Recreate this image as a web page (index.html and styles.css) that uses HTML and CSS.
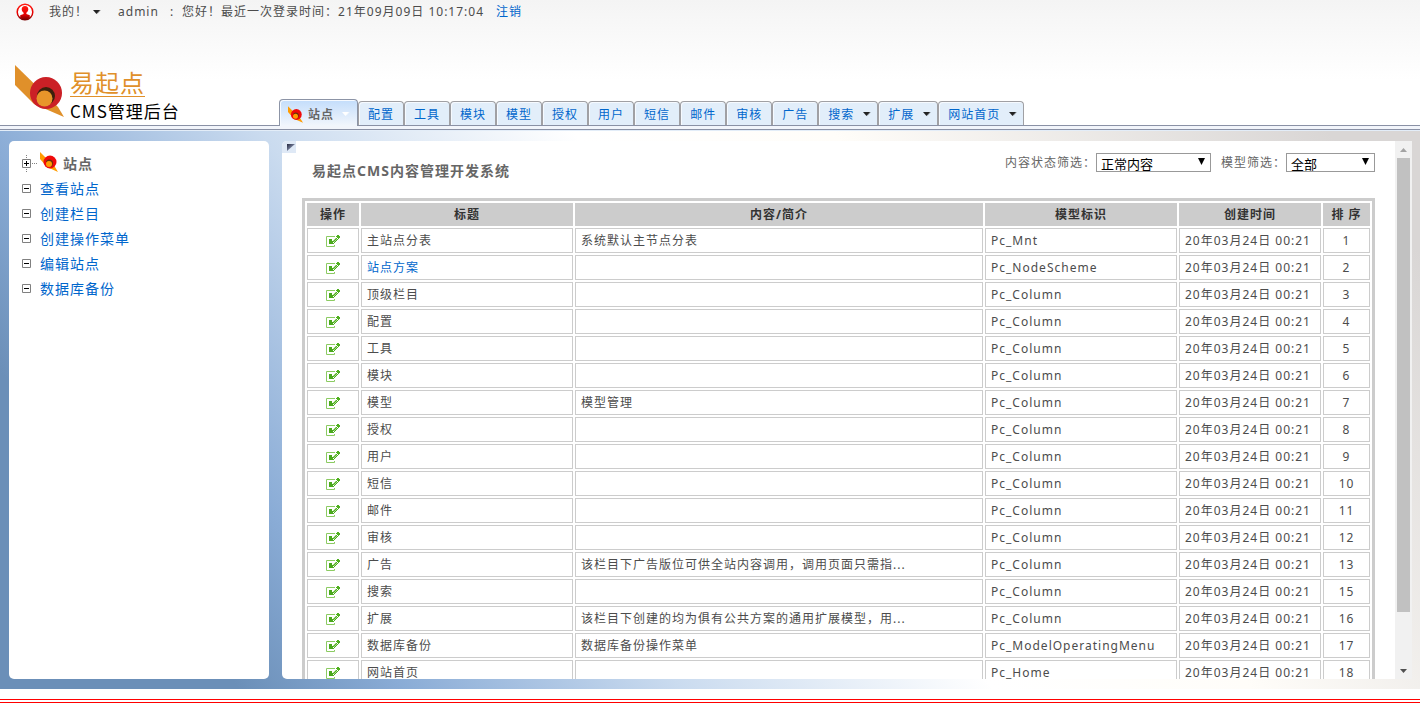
FILE: index.html
```html
<!DOCTYPE html>
<html lang="zh-CN">
<head>
<meta charset="utf-8">
<title>易起点CMS管理后台</title>
<link rel="stylesheet" href="styles.css">
</head>
<body>
<svg class="sprite" aria-hidden="true">
  <symbol id="edit" viewBox="0 0 14 12">
    <path d="M9 1.500H.5v10h8V10" fill="none" stroke="#8ccb62"/>
    <path d="M3 4h3v2h1v2h1v1H3z" fill="#4aa81c"/>
    <path d="M6 7h1v1H6zM8 7h1v1H8zM7 6h1v1H7zM9 6h1v1H9zM8 5h1v1H8zM10 5h1v1h-1zM7 8h1v1H7zM9 4h1v1H9zM11 4h1v1h-1zM10 3h1v1h-1z" fill="#4fae22"/>
    <path d="M7 5h1v1H7zM8 4h1v1H8zM9 5h1v1H9zM10 4h1v1h-1zM8 6h1v1H8zM9 3h1v1H9z" fill="#a9d98a"/>
    <path d="M11 0h2v1h1v2h-1v1h-1V3h-1V2h-1V1h1z" fill="#4fb01e"/>
  </symbol>
  <symbol id="caret" viewBox="0 0 9 5">
    <path d="M1 0h7L4.500 4z"/>
    <path d="M7 0h2L5 4.500z" opacity=".35"/>
  </symbol>
  <symbol id="bird" viewBox="0 0 18 20">
    <path d="M0 0v7l7 8 11 5-3-5-9-9z" fill="#ff9c00"/>
    <circle cx="10" cy="10" r="6.500" fill="#f00a0a"/>
    <path d="M6 10q0-2 3-2.500 4 0 4 3.500 0 3-2 4-3-4-5-5z" fill="#6b3208"/>
    <circle cx="9" cy="12" r="3" fill="#ff9c00"/>
  </symbol>
  <symbol id="minus" viewBox="0 0 9 9">
    <path d="M.500.500h8v8h-8z" fill="#fff" stroke="#808080"/>
    <path d="M2 4.500h5" stroke="#000"/>
  </symbol>
</svg>

<header class="header">
  <div class="userbar">
    <svg class="user-icon" viewBox="0 0 18 18">
      <defs><linearGradient id="ring" x1="0" y1="0" x2="0" y2="1"><stop offset="0" stop-color="#ff1a10"/><stop offset=".6" stop-color="#e80000"/><stop offset="1" stop-color="#7a0000"/></linearGradient></defs>
      <circle cx="9" cy="9" r="7.800" fill="#fff" stroke="url(#ring)" stroke-width="1.500"/>
      <path d="M9 3c2.200 0 3.300 1.500 3.300 3.300 0 1.600-.800 2.800-1.900 3.400v1.300l3.400 1.300v2.500Q9 18.500 4.200 14.800v-2.500L7.600 11V9.700C6.500 9.100 5.700 7.900 5.700 6.300 5.700 4.500 6.800 3 9 3z" fill="url(#ring)"/>
    </svg>
    <button class="mine" type="button">我的！<svg class="caret"><use href="#caret"/></svg></button>
    <span class="name">admin</span>
    <span class="colon">:</span>
    <span>您好！最近一次登录时间：21年09月09日 10:17:04</span>
    <a class="logout" href="#">注销</a>
  </div>
  <div class="masthead">
    <a class="logo" href="#">
      <svg class="logo-mark" viewBox="0 0 50 53">
        <path d="M0 0v20l19 19 30 13-6-10z" fill="#e0902a"/>
        <circle cx="31" cy="28" r="16" fill="#cb2026"/>
        <circle cx="31" cy="31" r="9" fill="#3d200c"/>
        <circle cx="29.500" cy="33.500" r="8" fill="#e8952a"/>
      </svg>
      <span class="logo-text">
        <span class="brand">易起点</span>
        <span class="product">CMS管理后台</span>
      </span>
    </a>
    <nav class="tabs">
      <a class="tab active" href="#"><svg class="tab-bird"><use href="#bird"/></svg>站点<svg class="caret"><use href="#caret"/></svg></a>
      <a class="tab" href="#">配置</a>
      <a class="tab" href="#">工具</a>
      <a class="tab" href="#">模块</a>
      <a class="tab" href="#">模型</a>
      <a class="tab" href="#">授权</a>
      <a class="tab" href="#">用户</a>
      <a class="tab" href="#">短信</a>
      <a class="tab" href="#">邮件</a>
      <a class="tab" href="#">审核</a>
      <a class="tab" href="#">广告</a>
      <a class="tab drop-tab" href="#">搜索<svg class="caret"><use href="#caret"/></svg></a>
      <a class="tab drop-tab" href="#">扩展<svg class="caret"><use href="#caret"/></svg></a>
      <a class="tab drop-tab" href="#">网站首页<svg class="caret"><use href="#caret"/></svg></a>
    </nav>
  </div>
</header>
<div class="rule"></div>

<main class="main">
  <aside class="sidebar">
    <div class="root">
      <svg class="plus" viewBox="0 0 15 17">
        <path d="M4.500 0v17M10 8.500h5" stroke="#808080" stroke-dasharray="1 1"/>
        <path d="M.500 4.500h8v8h-8z" fill="#fff" stroke="#808080"/>
        <path d="M2 8.500h5M4.500 6v5" stroke="#000"/>
      </svg>
      <svg class="root-bird"><use href="#bird"/></svg>
      <span>站点</span>
    </div>
    <ul class="menu">
      <li><svg class="minus"><use href="#minus"/></svg><a href="#">查看站点</a></li>
      <li><svg class="minus"><use href="#minus"/></svg><a href="#">创建栏目</a></li>
      <li><svg class="minus"><use href="#minus"/></svg><a href="#">创建操作菜单</a></li>
      <li><svg class="minus"><use href="#minus"/></svg><a href="#">编辑站点</a></li>
      <li><svg class="minus"><use href="#minus"/></svg><a href="#">数据库备份</a></li>
    </ul>
  </aside>

  <section class="panel">
    <button class="collapse" type="button" aria-label="收起">
      <svg class="corner" viewBox="0 0 8 7">
        <defs><linearGradient id="fold" x1="0" y1="0" x2="1" y2="1"><stop offset="0" stop-color="#23283f"/><stop offset=".6" stop-color="#8089a5"/></linearGradient></defs>
        <path d="M0 0h8L0 7z" fill="url(#fold)"/>
      </svg>
    </button>
    <div class="content">
      <div class="heading">
        <h1 class="title">易起点CMS内容管理开发系统</h1>
        <form class="filters">
          <label for="state">内容状态筛选：</label>
          <span class="pick pick-state"><select id="state"><option>正常内容</option></select><svg class="drop" viewBox="0 0 7 7"><path d="M0 0h7L3.500 7z"/></svg></span>
          <label for="model" class="second">模型筛选：</label>
          <span class="pick pick-model"><select id="model"><option>全部</option></select><svg class="drop" viewBox="0 0 7 7"><path d="M0 0h7L3.500 7z"/></svg></span>
        </form>
      </div>
      <table class="grid">
        <colgroup><col class="c-op"><col class="c-title"><col><col class="c-model"><col class="c-time"><col class="c-order"></colgroup>
        <thead><tr><th>操作</th><th>标题</th><th>内容/简介</th><th>模型标识</th><th>创建时间</th><th>排 序</th></tr></thead>
        <tbody>
          <tr><td><svg class="edit"><use href="#edit"/></svg></td><td>主站点分表</td><td>系统默认主节点分表</td><td>Pc_Mnt</td><td>20年03月24日 00:21</td><td>1</td></tr>
          <tr><td><svg class="edit"><use href="#edit"/></svg></td><td><a href="#">站点方案</a></td><td></td><td>Pc_NodeScheme</td><td>20年03月24日 00:21</td><td>2</td></tr>
          <tr><td><svg class="edit"><use href="#edit"/></svg></td><td>顶级栏目</td><td></td><td>Pc_Column</td><td>20年03月24日 00:21</td><td>3</td></tr>
          <tr><td><svg class="edit"><use href="#edit"/></svg></td><td>配置</td><td></td><td>Pc_Column</td><td>20年03月24日 00:21</td><td>4</td></tr>
          <tr><td><svg class="edit"><use href="#edit"/></svg></td><td>工具</td><td></td><td>Pc_Column</td><td>20年03月24日 00:21</td><td>5</td></tr>
          <tr><td><svg class="edit"><use href="#edit"/></svg></td><td>模块</td><td></td><td>Pc_Column</td><td>20年03月24日 00:21</td><td>6</td></tr>
          <tr><td><svg class="edit"><use href="#edit"/></svg></td><td>模型</td><td>模型管理</td><td>Pc_Column</td><td>20年03月24日 00:21</td><td>7</td></tr>
          <tr><td><svg class="edit"><use href="#edit"/></svg></td><td>授权</td><td></td><td>Pc_Column</td><td>20年03月24日 00:21</td><td>8</td></tr>
          <tr><td><svg class="edit"><use href="#edit"/></svg></td><td>用户</td><td></td><td>Pc_Column</td><td>20年03月24日 00:21</td><td>9</td></tr>
          <tr><td><svg class="edit"><use href="#edit"/></svg></td><td>短信</td><td></td><td>Pc_Column</td><td>20年03月24日 00:21</td><td>10</td></tr>
          <tr><td><svg class="edit"><use href="#edit"/></svg></td><td>邮件</td><td></td><td>Pc_Column</td><td>20年03月24日 00:21</td><td>11</td></tr>
          <tr><td><svg class="edit"><use href="#edit"/></svg></td><td>审核</td><td></td><td>Pc_Column</td><td>20年03月24日 00:21</td><td>12</td></tr>
          <tr><td><svg class="edit"><use href="#edit"/></svg></td><td>广告</td><td>该栏目下广告版位可供全站内容调用，调用页面只需指...</td><td>Pc_Column</td><td>20年03月24日 00:21</td><td>13</td></tr>
          <tr><td><svg class="edit"><use href="#edit"/></svg></td><td>搜索</td><td></td><td>Pc_Column</td><td>20年03月24日 00:21</td><td>15</td></tr>
          <tr><td><svg class="edit"><use href="#edit"/></svg></td><td>扩展</td><td>该栏目下创建的均为俱有公共方案的通用扩展模型，用...</td><td>Pc_Column</td><td>20年03月24日 00:21</td><td>16</td></tr>
          <tr><td><svg class="edit"><use href="#edit"/></svg></td><td>数据库备份</td><td>数据库备份操作菜单</td><td>Pc_ModelOperatingMenu</td><td>20年03月24日 00:21</td><td>17</td></tr>
          <tr><td><svg class="edit"><use href="#edit"/></svg></td><td>网站首页</td><td></td><td>Pc_Home</td><td>20年03月24日 00:21</td><td>18</td></tr>
        </tbody>
      </table>
    </div>
    <div class="scrollbar" aria-hidden="true">
      <svg class="arrow up" viewBox="0 0 7 4"><path d="M0 4h7L3.500 0z"/></svg>
      <div class="track"><div class="thumb"></div></div>
      <svg class="arrow down" viewBox="0 0 7 4"><path d="M0 0h7L3.500 4z"/></svg>
    </div>
  </section>
</main>
<footer class="footer"></footer>
</body>
</html>
```

FILE: styles.css
```css
* { box-sizing: border-box; }

body {
  margin: 0;
  height: 100vh;
  display: flex;
  flex-direction: column;
  overflow: hidden;
  background: #fff;
  color: #4c4c4c;
  font: 12px/18px "Noto Sans", "Noto Sans CJK SC", sans-serif;
  letter-spacing: 1px;
}

a { color: #06c; text-decoration: none; }
svg { flex: none; display: block; }
button { border: 0; padding: 0; background: none; color: inherit; font: inherit; letter-spacing: inherit; }
.sprite { position: absolute; width: 0; height: 0; }
.caret { width: 9px; height: 5px; fill: #222; }

/* header */
.header { background: linear-gradient(#f4f4f4, #fff 80px); }
.userbar { display: flex; align-items: center; height: 24px; padding-left: 16px; white-space: nowrap; }
.user-icon { width: 18px; height: 18px; margin-right: 15px; }
.mine { display: flex; align-items: center; gap: 4px; margin-right: 17px; }
.name { margin-right: 11px; }
.colon { margin-right: 8px; }
.logout { margin-left: 12px; }

.masthead { display: flex; align-items: flex-end; height: 101px; }
.logo { display: flex; flex: none; width: 264px; margin-left: 15px; padding-bottom: 7px; align-items: flex-end; }
.logo-mark { width: 50px; height: 53px; }
.logo-text { display: flex; flex-direction: column; align-items: flex-start; margin-left: 5px; }
.brand {
  height: 28px;
  color: #e0902a;
  border-bottom: 1px solid #e0902a;
  font: 24px/26px "Noto Sans CJK SC", sans-serif;
}
.product { color: #000; font: 17px/27px "Noto Sans CJK SC", sans-serif; height: 21px; }

.tabs { display: flex; align-items: flex-end; white-space: nowrap; }
.tab {
  display: flex;
  align-items: center;
  gap: 5px;
  height: 24px;
  padding: 2px 9px 0;
  border: 1px solid #a0a0a4;
  border-bottom: 0;
  border-radius: 4px 4px 0 0;
  background: #e2eefa;
  box-shadow: inset 1px 1px #f6faff;
}
.drop-tab { gap: 8px; padding-right: 6px; }
.tab.active {
  height: 27px;
  margin-bottom: -1px;
  padding: 3px 7px 0 8px;
  border-color: #8c94a6;
  background: linear-gradient(#c3ddfb, #f2f6fc);
  color: #666;
  font-weight: bold;
  z-index: 1;
}
.tab-bird { width: 15px; height: 17px; }
.tab.active .caret { fill: #fff; margin-left: 2px; }

.rule {
  flex: none;
  height: 6px;
  border-top: 1px solid #8a91a5;
  background: linear-gradient(#f2f5fb 3px, #8a91a5 3px, #8a91a5 4px, #e3edf8 4px);
}

/* work area */
.main {
  flex: 1;
  min-height: 0;
  display: flex;
  gap: 13px;
  padding: 10px 8px 10px 9px;
  background: linear-gradient(53deg, #6b8fb8 13%, #8aacd6 22%, #cadbef 37%, #fff 54%, #fffdf9 68%, #d9d6d5 95%);
}

.sidebar { flex: none; width: 260px; padding: 10px 13px; border-radius: 5px; background: #fff; font-size: 14px; }
.root { display: flex; align-items: center; height: 25px; color: #666; font-weight: bold; }
.plus { width: 15px; height: 17px; margin-right: 3px; }
.root-bird { width: 18px; height: 20px; margin: 0 5px 4px 0; }
.menu { margin: 0; padding: 0; list-style: none; }
.menu li { display: flex; align-items: center; gap: 9px; height: 25px; }
.minus { width: 9px; height: 9px; }

.panel { position: relative; flex: 1; min-width: 0; display: flex; border-radius: 5px 0 0 5px; background: #fff; overflow: hidden; }
.collapse { position: absolute; left: 0; top: 0; width: 14px; height: 12px; padding: 0 0 0 5px; background: #dfe9f6; }
.corner { width: 8px; height: 7px; }
.content { flex: 1; min-width: 0; padding: 0 20px; overflow: hidden; }

.heading { display: flex; justify-content: space-between; align-items: flex-start; height: 57px; padding: 12px 0 0 10px; }
.title { margin: 8px 0 0; color: #666; font-size: 14px; line-height: 20px; }
.filters { display: flex; align-items: center; color: #666; }
.second { margin-left: 10px; }
.pick { position: relative; display: block; }
.pick-state { width: 115px; }
.pick-model { width: 89px; }
.pick select {
  appearance: none;
  display: block;
  width: 100%;
  height: 19px;
  padding: 2px 4px 0;
  border: 1px solid #999;
  border-radius: 0;
  background: #fff;
  color: #000;
  font: 13px/16px "Noto Sans CJK SC", sans-serif;
}
.drop { position: absolute; right: 6px; top: 5px; width: 7px; height: 7px; pointer-events: none; }

.grid { width: 100%; table-layout: fixed; border: 3px solid #ccc; border-collapse: separate; border-spacing: 2px; }
.c-op { width: 52px; }
.c-title { width: 212px; }
.c-model { width: 192px; }
.c-time { width: 142px; }
.c-order { width: 47px; }
.grid th { height: 23px; padding: 0; background: #ccc; color: #333; }
.grid td { height: 25px; padding: 0 5px; border: 1px solid #ccc; white-space: nowrap; }
.grid td:last-child { text-align: center; }
.edit { width: 14px; height: 12px; margin: 0 auto; }

.scrollbar { flex: none; display: flex; flex-direction: column; align-items: center; width: 17px; background: #f1f1f1; }
.arrow { width: 7px; height: 4px; margin: 7px 0 6px; }
.up { fill: #a3a3a3; }
.down { fill: #505050; }
.track { flex: 1; width: 13px; }
.thumb { height: 90%; background: #c1c1c1; }

.footer { flex: none; height: 15px; padding-top: 10px; }
.footer::before { content: ""; display: block; border-top: 4px double #f00; }
```
